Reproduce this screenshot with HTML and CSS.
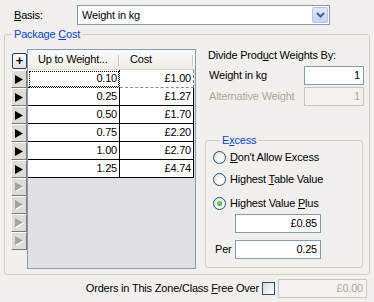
FILE: index.html
```html
<!DOCTYPE html>
<html>
<head>
<meta charset="utf-8">
<link rel="stylesheet" href="styles.css">
</head>
<body>
<div class="form">
  <div class="basis-row">
    <span class="basis-label"><u>B</u>asis:</span>
    <div class="select">
      <span class="select-text">Weight in kg</span>
      <span class="dd"><svg width="9" height="6" viewBox="0 0 9 6"><path d="M1 1 L4.5 4.5 L8 1" fill="none" stroke="#4d6185" stroke-width="2"/></svg></span>
    </div>
  </div>

  <fieldset class="group pkg">
    <legend>Package <u>C</u>ost</legend>
    <div class="pkg-body">
      <div class="row-btns">
        <div class="plus-slot"><span class="plus">+</span></div>
        <span class="rbtn"><svg width="8" height="9" viewBox="0 0 8 9"><polygon points="0,0 8,4.5 0,9" fill="#000"/></svg></span>
        <span class="rbtn"><svg width="8" height="9" viewBox="0 0 8 9"><polygon points="0,0 8,4.5 0,9" fill="#000"/></svg></span>
        <span class="rbtn"><svg width="8" height="9" viewBox="0 0 8 9"><polygon points="0,0 8,4.5 0,9" fill="#000"/></svg></span>
        <span class="rbtn"><svg width="8" height="9" viewBox="0 0 8 9"><polygon points="0,0 8,4.5 0,9" fill="#000"/></svg></span>
        <span class="rbtn"><svg width="8" height="9" viewBox="0 0 8 9"><polygon points="0,0 8,4.5 0,9" fill="#000"/></svg></span>
        <span class="rbtn"><svg width="8" height="9" viewBox="0 0 8 9"><polygon points="0,0 8,4.5 0,9" fill="#000"/></svg></span>
        <span class="rbtn"><svg width="9" height="10" viewBox="0 0 9 10"><polygon points="1,1 9,5.5 1,10" fill="#fff"/><polygon points="0,0 8,4.5 0,9" fill="#a3a3a3"/></svg></span>
        <span class="rbtn"><svg width="9" height="10" viewBox="0 0 9 10"><polygon points="1,1 9,5.5 1,10" fill="#fff"/><polygon points="0,0 8,4.5 0,9" fill="#a3a3a3"/></svg></span>
        <span class="rbtn"><svg width="9" height="10" viewBox="0 0 9 10"><polygon points="1,1 9,5.5 1,10" fill="#fff"/><polygon points="0,0 8,4.5 0,9" fill="#a3a3a3"/></svg></span>
        <span class="rbtn"><svg width="9" height="10" viewBox="0 0 9 10"><polygon points="1,1 9,5.5 1,10" fill="#fff"/><polygon points="0,0 8,4.5 0,9" fill="#a3a3a3"/></svg></span>
      </div>
      <div class="grid">
        <div class="ghead">
          <span class="hcell c1">Up to Weight...</span>
          <span class="hcell c2">Cost</span>
        </div>
        <div class="grow first"><span class="cell c1 focus">0.10</span><span class="cell c2">£1.00</span></div>
        <div class="grow"><span class="cell c1">0.25</span><span class="cell c2">£1.27</span></div>
        <div class="grow"><span class="cell c1">0.50</span><span class="cell c2">£1.70</span></div>
        <div class="grow"><span class="cell c1">0.75</span><span class="cell c2">£2.20</span></div>
        <div class="grow"><span class="cell c1">1.00</span><span class="cell c2">£2.70</span></div>
        <div class="grow"><span class="cell c1">1.25</span><span class="cell c2">£4.74</span></div>
      </div>
      <div class="right">
        <div class="divide">Divide Prod<u>u</u>ct Weights By:</div>
        <div class="frow"><span class="flabel">Weight in kg</span><span class="input w60">1</span></div>
        <div class="frow alt"><span class="flabel dis">Alternative Weight</span><span class="input w60 disabled">1</span></div>
        <fieldset class="group excess">
          <legend>E<u>x</u>cess</legend>
          <div class="radio r1"><span class="rcircle"></span><span><u>D</u>on't Allow Excess</span></div>
          <div class="radio r2"><span class="rcircle"></span><span>Highest <u>T</u>able Value</span></div>
          <div class="radio r3"><span class="rcircle on"></span><span>Highest Value <u>P</u>lus</span></div>
          <div class="xrow x1"><span class="xlabel"></span><span class="input w86">£0.85</span></div>
          <div class="xrow x2"><span class="xlabel">Per</span><span class="input w86">0.25</span></div>
        </fieldset>
      </div>
    </div>
  </fieldset>

  <div class="free-row">
    <span class="free-label">Orders in This Zone/Class <u>F</u>ree Over</span>
    <span class="check"></span>
    <span class="input w89 disabled">£0.00</span>
  </div>
</div>
</body>
</html>
```
FILE: styles.css
```css
html, body {
  margin: 0;
  padding: 0;
}
body {
  width: 374px;
  height: 302px;
  overflow: hidden;
  background: #f1f0ec;
  font-family: "Liberation Sans", Arial, sans-serif;
  font-size: 11px;
  line-height: 13px;
  letter-spacing: -0.2px;
  color: #000;
}
u { text-decoration: underline; text-underline-offset: 1px; }

.basis-row {
  display: flex;
  align-items: center;
  padding: 5px 0 0 14px;
  height: 20px;
}
.basis-label { width: 63px; }
.select {
  width: 253px;
  height: 20px;
  box-sizing: border-box;
  border: 1px solid #7f9db9;
  background: #fff;
  display: flex;
  align-items: center;
}
.select-text { flex: 1; padding-left: 4px; }
.dd {
  width: 16px;
  height: 16px;
  margin-right: 1px;
  box-sizing: border-box;
  border: 1px solid #b4c6ef;
  border-radius: 2px;
  background: linear-gradient(#e0e8fd, #c3d3fb);
  display: flex;
  align-items: center;
  justify-content: center;
}

.group {
  border: 1px solid #d0d0bf;
  border-radius: 3px;
  padding: 0;
  box-sizing: border-box;
}
.group legend {
  color: #0046d5;
  padding: 0 2px;
  margin-left: 7px;
  line-height: 13px;
}
.pkg {
  margin: 3px 0 0 4px;
  width: 366px;
  height: 247px;
}
.pkg-body {
  display: flex;
  align-items: flex-start;
  padding: 8px 0 0 6px;
}

.row-btns {
  display: flex;
  flex-direction: column;
  width: 16px;
}
.plus-slot {
  height: 21px;
  display: flex;
  align-items: flex-start;
  padding-top: 4px;
  box-sizing: border-box;
}
.plus {
  width: 15px;
  height: 16px;
  margin-left: 1px;
  box-sizing: border-box;
  border: 1px solid #1f3c7a;
  border-radius: 2px;
  background: linear-gradient(#ffffff, #e3e2da);
  font-weight: bold;
  font-size: 13px;
  line-height: 13px;
  text-align: center;
  letter-spacing: 0;
}
.rbtn {
  height: 18px;
  box-sizing: border-box;
  border: 1px solid;
  border-color: #ffffff #7c7a70 #7c7a70 #ffffff;
  background: #dedcd6;
  display: flex;
  align-items: center;
  padding-left: 3px;
}

.grid {
  width: 169px;
  height: 220px;
  box-sizing: border-box;
  border: 1px solid #7f9db9;
  background: #e1e0e5;
}
.ghead {
  display: flex;
  height: 20px;
  background: linear-gradient(#fbfbf9, #efeee8);
  border-bottom: 1px solid #d8d6c8;
  box-sizing: border-box;
}
.hcell {
  box-sizing: border-box;
  padding-left: 10px;
  line-height: 19px;
  position: relative;
}
.hcell.c1 { width: 92px; }
.hcell.c2 { width: 74px; }
.hcell::after {
  content: "";
  position: absolute;
  right: 1px;
  top: 5px;
  height: 11px;
  width: 1px;
  background: #c7c5b2;
  box-shadow: 1px 0 0 #fff;
}
.grow {
  display: flex;
  height: 18px;
  width: 166px;
}
.cell {
  box-sizing: border-box;
  background: #fff;
  border-bottom: 1px solid #000;
  border-right: 1px solid #000;
  text-align: right;
  padding-right: 2px;
  line-height: 17px;
}
.cell.c1 { width: 92px; }
.cell.c2 { width: 74px; }
.grow.first .cell.c1 { border-right-style: dotted; border-bottom-style: dotted; }
.grow.first .cell.c2 { border-color: #8a8a8a; border-right-style: dashed; border-bottom-style: dashed; }
.focus { outline: 1px dotted #000; outline-offset: -2px; }

.right {
  margin-left: 9px;
  width: 159px;
  display: flex;
  flex-direction: column;
}
.divide { padding-left: 3px; height: 13px; }
.frow {
  display: flex;
  justify-content: space-between;
  align-items: center;
  margin-top: 4px;
  height: 19px;
}
.frow.alt { margin-top: 2px; }
.flabel { padding-left: 4px; }
.dis { color: #aca899; }
.input {
  box-sizing: border-box;
  height: 19px;
  border: 1px solid #7f9db9;
  background: #fff;
  text-align: right;
  padding-right: 3px;
  line-height: 17px;
}
.input.disabled {
  border-color: #c9c7ba;
  background: #f3f2ee;
  color: #aca899;
}
.w60 { width: 60px; }
.w86 { width: 86px; }
.w89 { width: 89px; }

.excess {
  margin: 28px 0 0 0;
  width: 158px;
  height: 134px;
  padding: 0 0 0 7px;
}
.radio {
  display: flex;
  align-items: center;
  height: 13px;
}
.radio.r1 { margin-top: 4px; }
.radio.r2 { margin-top: 9px; }
.radio.r3 { margin-top: 11px; }
.rcircle {
  width: 13px;
  height: 13px;
  box-sizing: border-box;
  border: 1px solid #1c5180;
  border-radius: 50%;
  background: radial-gradient(circle at 65% 65%, #ffffff 20%, #dcd9cf 100%);
  margin-right: 4px;
  display: flex;
  align-items: center;
  justify-content: center;
}
.rcircle.on::after {
  content: "";
  width: 5px;
  height: 5px;
  border-radius: 50%;
  background: radial-gradient(circle at 40% 40%, #6fe16f, #21a121);
}
.xrow {
  display: flex;
  align-items: center;
  padding-left: 2px;
}
.xrow.x1 { margin-top: 4px; }
.xrow.x2 { margin-top: 7px; }
.xlabel { width: 20px; }

.free-row {
  display: flex;
  justify-content: flex-end;
  align-items: center;
  margin-top: 4px;
  padding-right: 7px;
  height: 19px;
}
.free-label { margin-right: 3px; }
.check {
  width: 13px;
  height: 13px;
  box-sizing: border-box;
  border: 1px solid #1c5180;
  background: linear-gradient(135deg, #dcdbd5, #ffffff);
  margin-right: 3px;
}
```
